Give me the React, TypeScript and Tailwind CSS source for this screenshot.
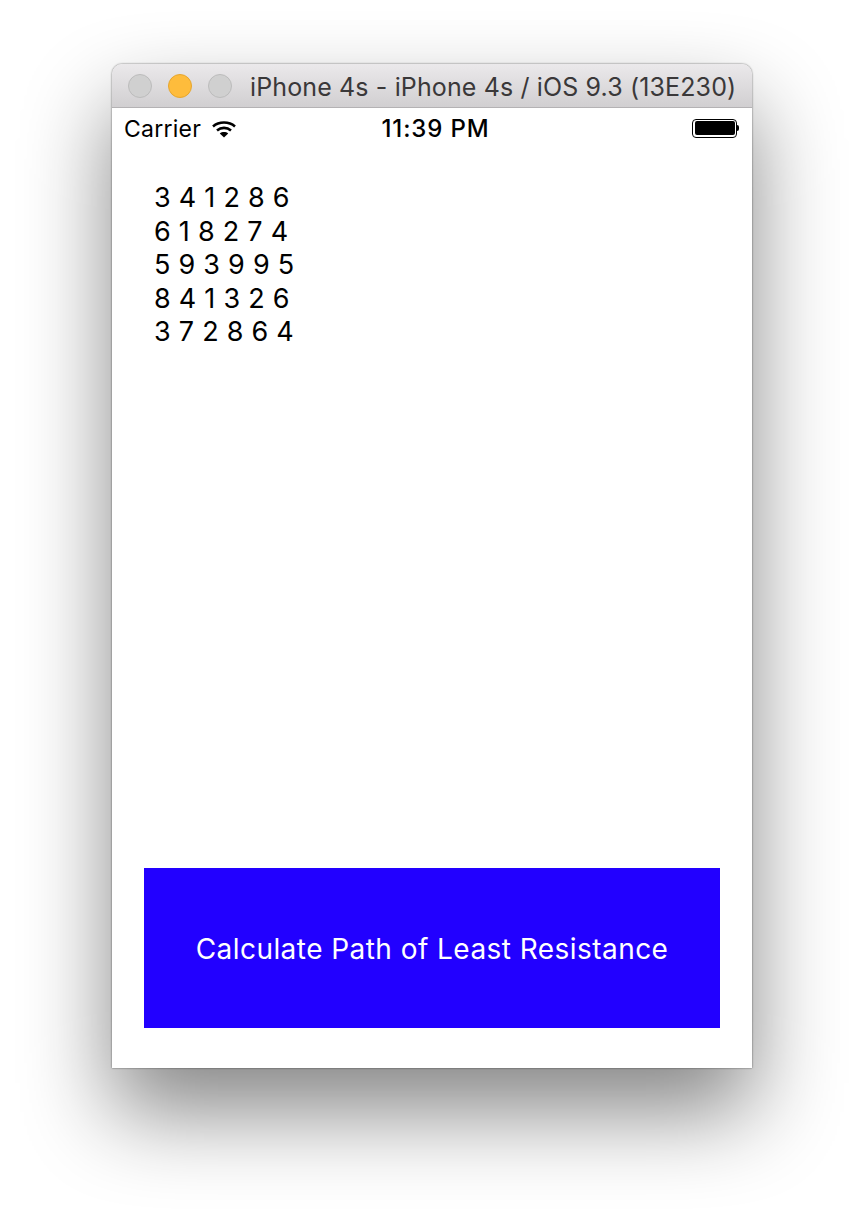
import React from 'react'

const rows = [
  '3 4 1 2 8 6',
  '6 1 8 2 7 4',
  '5 9 3 9 9 5',
  '8 4 1 3 2 6',
  '3 7 2 8 6 4',
]

function Wifi() {
  return (
    <svg width="26" height="20" viewBox="0 0 26 20" fill="none" stroke="#000" strokeWidth="2.6">
      <path d="M2 7.4C8 2.2 18 2.2 24 7.4" />
      <path d="M6 11.4C10 8 16 8 20 11.4" />
      <path d="M13 18.6L8.8 14.4C11 12.6 15 12.6 17.2 14.4Z" fill="#000" stroke="none" />
    </svg>
  )
}

function App() {
  return (
    <div className="w-[864px] h-[1228px] bg-white overflow-hidden pt-[64px] pl-[112px] font-['Inter',sans-serif]">
      <div className="w-[640px] h-[1004px] flex flex-col rounded-t-[10px] bg-white shadow-[0_44px_88px_rgba(0,0,0,0.48),0_0_2px_rgba(0,0,0,0.65)]">
        <div className="h-[44px] shrink-0 flex items-center pl-[16px] rounded-t-[10px] border-b border-[#b4b2b4] bg-gradient-to-b from-[#ebe9eb] to-[#d1cfd1]">
          <div className="w-[24px] h-[24px] rounded-full bg-[#d0d0d0] border border-[#bcbcbc]" />
          <div className="w-[24px] h-[24px] rounded-full bg-[#febc3c] border border-[#e6a62e] ml-[16px]" />
          <div className="w-[24px] h-[24px] rounded-full bg-[#d0d0d0] border border-[#bcbcbc] ml-[16px]" />
          <div className="ml-[18px] pt-[3px] text-[25px] leading-none tracking-[0.13px] text-[#3a3839] whitespace-nowrap">iPhone 4s - iPhone 4s / iOS 9.3 (13E230)</div>
        </div>

        <div className="h-[42px] shrink-0 flex items-center justify-between pl-[12px] pr-[13px]">
          <div className="flex items-center w-[208px]">
            <span className="text-[23px] tracking-[0.25px] text-black">Carrier</span>
            <span className="ml-[10px]"><Wifi /></span>
          </div>
          <span className="text-[24px] font-medium tracking-[0.85px] text-black">11:39 PM</span>
          <div className="w-[200px] flex justify-end items-center pb-[2px]">
            <div className="w-[45px] h-[19px] rounded-[4px] border border-black p-[1.5px]">
              <div className="w-full h-full rounded-[2px] bg-black" />
            </div>
            <div className="w-[2px] h-[6px] rounded-r-[2px] bg-black" />
          </div>
        </div>

        <div className="flex-1 flex flex-col pl-[42px] pt-[31px]">
          {rows.map((row) => (
            <div key={row} className="text-[27px] leading-[33.5px] tracking-[0.25px] text-black whitespace-nowrap">{row}</div>
          ))}
        </div>

        <div className="h-[160px] mx-[32px] mb-[40px] pt-[2px] shrink-0 flex items-center justify-center bg-[#2200ff] text-white text-[28px] tracking-[0.45px] whitespace-nowrap">
          Calculate Path of Least Resistance
        </div>
      </div>
    </div>
  )
}

export default App
